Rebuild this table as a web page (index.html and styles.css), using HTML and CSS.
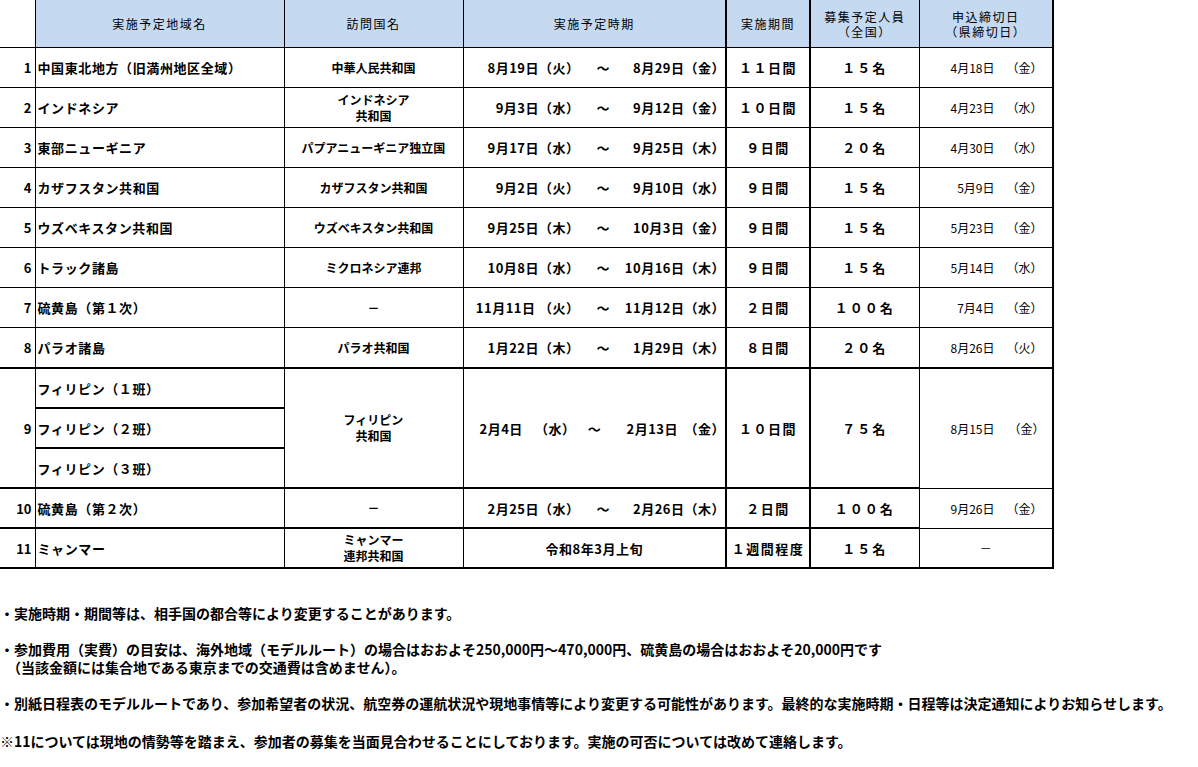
FILE: index.html
```html
<!DOCTYPE html>
<html lang="ja">
<head>
<meta charset="utf-8">
<title>実施予定</title>
<link rel="stylesheet" href="styles.css">
</head>
<body>
<table class="sched">
  <colgroup>
    <col class="c-no"><col class="c-area"><col class="c-country"><col class="c-date"><col class="c-period"><col class="c-num"><col class="c-dead">
  </colgroup>
  <thead>
    <tr class="hd">
      <th class="no"></th>
      <th>実施予定地域名</th>
      <th>訪問国名</th>
      <th>実施予定時期</th>
      <th class="thick-l">実施期間</th>
      <th class="thick-l">募集予定人員<br>（全国）</th>
      <th>申込締切日<br>（県締切日）</th>
    </tr>
  </thead>
  <tbody>
    <tr>
      <td class="no">1</td><td class="area">中国東北地方（旧満州地区全域）</td><td class="country">中華人民共和国</td>
      <td class="date"><div class="rng"><span class="s">8月19日（火）</span><span class="t">～</span><span class="e">8月29日（金）</span></div></td>
      <td class="period thick-l">１１日間</td><td class="num thick-l">１５名</td>
      <td class="dead"><div class="dl"><span class="d">4月18日</span><span class="w">（金）</span></div></td>
    </tr>
    <tr>
      <td class="no">2</td><td class="area">インドネシア</td><td class="country two">インドネシア<br>共和国</td>
      <td class="date"><div class="rng"><span class="s">9月3日（水）</span><span class="t">～</span><span class="e">9月12日（金）</span></div></td>
      <td class="period thick-l">１０日間</td><td class="num thick-l">１５名</td>
      <td class="dead"><div class="dl"><span class="d">4月23日</span><span class="w">（水）</span></div></td>
    </tr>
    <tr>
      <td class="no">3</td><td class="area">東部ニューギニア</td><td class="country">パプアニューギニア独立国</td>
      <td class="date"><div class="rng"><span class="s">9月17日（水）</span><span class="t">～</span><span class="e">9月25日（木）</span></div></td>
      <td class="period thick-l">９日間</td><td class="num thick-l">２０名</td>
      <td class="dead"><div class="dl"><span class="d">4月30日</span><span class="w">（水）</span></div></td>
    </tr>
    <tr>
      <td class="no">4</td><td class="area">カザフスタン共和国</td><td class="country">カザフスタン共和国</td>
      <td class="date"><div class="rng"><span class="s">9月2日（火）</span><span class="t">～</span><span class="e">9月10日（水）</span></div></td>
      <td class="period thick-l">９日間</td><td class="num thick-l">１５名</td>
      <td class="dead"><div class="dl"><span class="d">5月9日</span><span class="w">（金）</span></div></td>
    </tr>
    <tr>
      <td class="no">5</td><td class="area">ウズベキスタン共和国</td><td class="country">ウズベキスタン共和国</td>
      <td class="date"><div class="rng"><span class="s">9月25日（木）</span><span class="t">～</span><span class="e">10月3日（金）</span></div></td>
      <td class="period thick-l">９日間</td><td class="num thick-l">１５名</td>
      <td class="dead"><div class="dl"><span class="d">5月23日</span><span class="w">（金）</span></div></td>
    </tr>
    <tr>
      <td class="no">6</td><td class="area">トラック諸島</td><td class="country">ミクロネシア連邦</td>
      <td class="date"><div class="rng"><span class="s">10月8日（水）</span><span class="t">～</span><span class="e">10月16日（木）</span></div></td>
      <td class="period thick-l">９日間</td><td class="num thick-l">１５名</td>
      <td class="dead"><div class="dl"><span class="d">5月14日</span><span class="w">（水）</span></div></td>
    </tr>
    <tr>
      <td class="no">7</td><td class="area">硫黄島（第１次）</td><td class="country">－</td>
      <td class="date"><div class="rng"><span class="s">11月11日 （火）</span><span class="t">～</span><span class="e">11月12日（水）</span></div></td>
      <td class="period thick-l">２日間</td><td class="num thick-l">１００名</td>
      <td class="dead"><div class="dl"><span class="d">7月4日</span><span class="w">（金）</span></div></td>
    </tr>
    <tr class="thick-b">
      <td class="no">8</td><td class="area">パラオ諸島</td><td class="country">パラオ共和国</td>
      <td class="date"><div class="rng"><span class="s">1月22日（木）</span><span class="t">～</span><span class="e">1月29日（木）</span></div></td>
      <td class="period thick-l">８日間</td><td class="num thick-l">２０名</td>
      <td class="dead"><div class="dl"><span class="d">8月26日</span><span class="w">（火）</span></div></td>
    </tr>
    <tr class="tight">
      <td class="no thick-bc" rowspan="3">9</td><td class="area sub">フィリピン（１班）</td><td class="country two thick-bc" rowspan="3">フィリピン<br>共和国</td>
      <td class="date thick-bc" rowspan="3"><div class="rng9"><span class="p"><span>2月4日</span><span>（水）</span></span><span class="t">～</span><span class="p p2"><span>2月13日</span><span>（金）</span></span></div></td>
      <td class="period thick-l thick-bc" rowspan="3">１０日間</td><td class="num thick-l thick-bc" rowspan="3">７５名</td>
      <td class="dead" rowspan="3"><div class="dl dl9"><span class="d">8月15日</span><span class="w">（金）</span></div></td>
    </tr>
    <tr class="tight">
      <td class="area sub">フィリピン（２班）</td>
    </tr>
    <tr class="tight">
      <td class="area thick-bc">フィリピン（３班）</td>
    </tr>
    <tr class="tight">
      <td class="no thick-bc">10</td><td class="area thick-bc">硫黄島（第２次）</td><td class="country thick-bc">－</td>
      <td class="date thick-bc"><div class="rng"><span class="s">2月25日（水）</span><span class="t">～</span><span class="e">2月26日（木）</span></div></td>
      <td class="period thick-l thick-bc">２日間</td><td class="num thick-l thick-bc">１００名</td>
      <td class="dead"><div class="dl"><span class="d">9月26日</span><span class="w">（金）</span></div></td>
    </tr>
    <tr class="last tight">
      <td class="no">11</td><td class="area">ミャンマー</td><td class="country two">ミャンマー<br>連邦共和国</td>
      <td class="date center">令和8年3月上旬</td>
      <td class="period thick-l">１週間程度</td><td class="num thick-l">１５名</td>
      <td class="dead center">－</td>
    </tr>
  </tbody>
</table>

<div class="notes">
  <p>・実施時期・期間等は、相手国の都合等により変更することがあります。</p>
  <p>・参加費用（実費）の目安は、海外地域（モデルルート）の場合はおおよそ250,000円～470,000円、硫黄島の場合はおおよそ20,000円です<br>　（当該金額には集合地である東京までの交通費は含めません）。</p>
  <p>・別紙日程表のモデルルートであり、参加希望者の状況、航空券の運航状況や現地事情等により変更する可能性があります。最終的な実施時期・日程等は決定通知によりお知らせします。</p>
  <p class="last-note">※11については現地の情勢等を踏まえ、参加者の募集を当面見合わせることにしております。実施の可否については改めて連絡します。</p>
</div>
</body>
</html>
```

FILE: styles.css
```css
html, body {
  margin: 0;
  padding: 0;
  background: #ffffff;
}

body {
  font-family: "Noto Sans CJK JP", "Noto Sans", sans-serif;
  color: #000000;
}

.sched {
  border-collapse: collapse;
  table-layout: fixed;
  width: 1053px;
}

.c-no { width: 35px; }
.c-area { width: 249px; }
.c-country { width: 179px; }
.c-date { width: 263px; }
.c-period { width: 84px; }
.c-num { width: 109px; }
.c-dead { width: 134px; }

.sched th,
.sched td {
  border: 1px solid #000;
  padding: 0;
  overflow: hidden;
  white-space: nowrap;
}

.sched th {
  background: #c5d9f1;
  height: 47px;
  font-size: 12px;
  font-weight: 400;
  letter-spacing: 1.5px;
  line-height: 15px;
  text-align: center;
  vertical-align: middle;
  border-top: none;
}

.sched th.no {
  background: #ffffff;
  border-left: none;
}

.sched th:last-child,
.sched td.dead {
  border-right: 2px solid #000;
}

.sched td {
  height: 39px;
  font-size: 13px;
  font-weight: 700;
  line-height: 15px;
  vertical-align: middle;
}

.sched tr.tight td {
  height: 38px;
}

.sched td.no {
  border-left: none;
  text-align: right;
  padding-right: 3px;
  font-size: 13px;
  letter-spacing: 0;
}

.sched .thick-l {
  border-left: 2px solid #000;
}

.sched tr.thick-b td,
.sched td.thick-bc,
.sched tr.last td {
  border-bottom: 2px solid #000;
}

.sched td.sub {
  border-bottom: 2px solid #000;
}

.area {
  padding-left: 2px !important;
  letter-spacing: 0.6px;
}

.country {
  font-size: 12px !important;
  text-align: center;
  line-height: 16px !important;
}

.date {
  font-size: 13px;
  letter-spacing: 0.5px;
}

.center {
  text-align: center;
}

.rng {
  display: grid;
  grid-template-columns: 116px 1fr 104px;
}

.rng .s { text-align: right; }
.rng .t { text-align: center; padding-left: 6px; }
.rng .e { text-align: right; }

.rng9 {
  display: grid;
  grid-template-columns: 112px 38px 1fr;
}

.rng9 .p {
  display: flex;
  justify-content: space-between;
  padding-left: 16px;
}

.rng9 .p2 {
  padding-left: 13px;
}

.rng9 .t { text-align: center; }

.period {
  text-align: center;
  letter-spacing: 1.5px;
}

.num {
  text-align: center;
  letter-spacing: 2px;
}

.dead {
  font-size: 12px !important;
  font-weight: 400 !important;
}

.dl {
  display: grid;
  grid-template-columns: 75px 1fr;
  column-gap: 12px;
}

.dl .d { text-align: right; }
.dl .w { text-align: left; }

.dl9 {
  column-gap: 14px;
}

.notes {
  margin-top: 35px;
  font-size: 14px;
  font-weight: 700;
  line-height: 18px;
}

.notes p {
  margin: 0 0 18px 0;
  white-space: nowrap;
}

.notes p.last-note {
  margin-top: 20px;
}
```
